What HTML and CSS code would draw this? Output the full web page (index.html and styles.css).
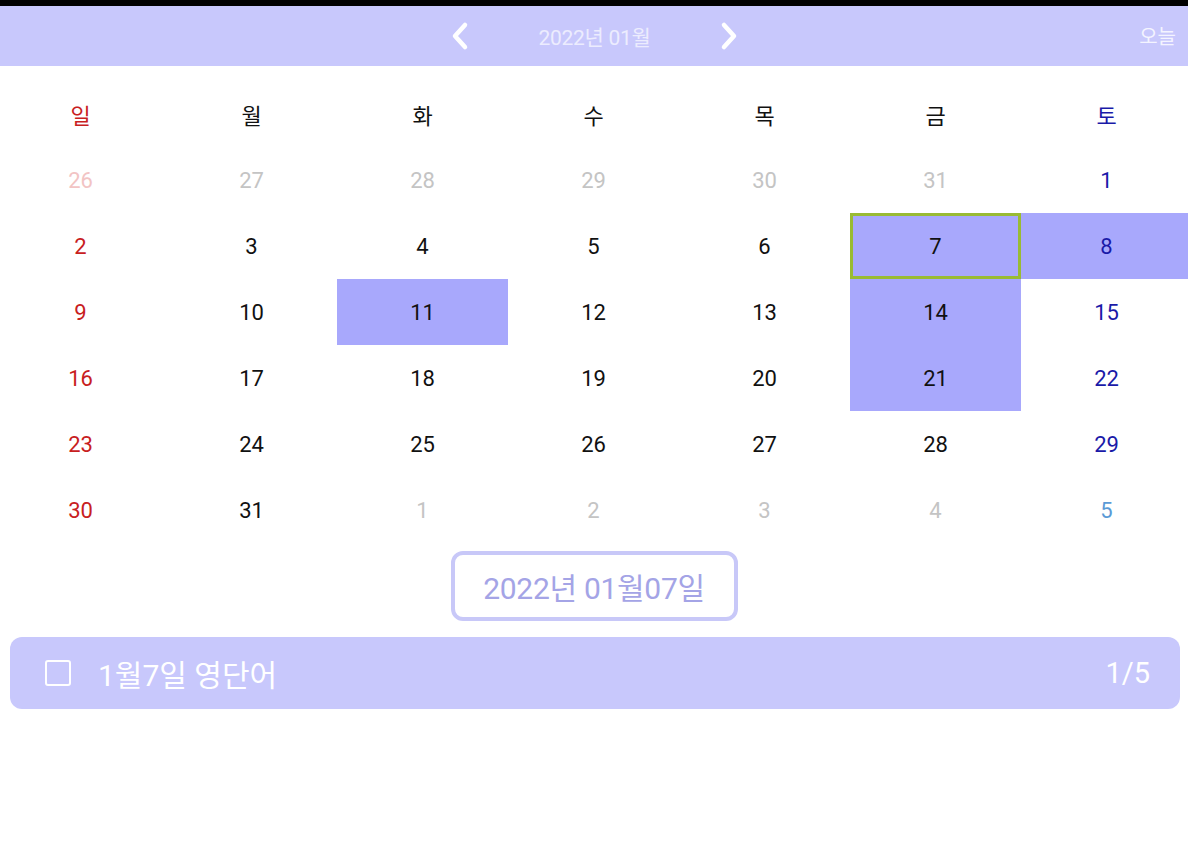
FILE: index.html
```html
<!DOCTYPE html>
<html lang="ko">
<head>
    <meta charset="UTF-8">
    <meta name="viewport" content="width=device-width, initial-scale=1.0">
    <title>Calendar</title>
    <link rel="stylesheet" href="styles.css">
</head>
<body>
    <div class="status-bar"></div>

    <header class="month-bar">
        <div class="month-nav">
            <svg class="chevron" width="22" height="30" viewBox="0 0 22 30"><path d="M16 4 L6 15 L16 26" /></svg>
            <span class="month-title">2022년 01월</span>
            <svg class="chevron" width="22" height="30" viewBox="0 0 22 30"><path d="M6 4 L16 15 L6 26" /></svg>
        </div>
        <span class="today-button">오늘</span>
    </header>

    <main>
        <div class="calendar">
            <div class="cell sun">일</div>
            <div class="cell">월</div>
            <div class="cell">화</div>
            <div class="cell">수</div>
            <div class="cell">목</div>
            <div class="cell">금</div>
            <div class="cell sat">토</div>

            <div class="cell sun other">26</div>
            <div class="cell other">27</div>
            <div class="cell other">28</div>
            <div class="cell other">29</div>
            <div class="cell other">30</div>
            <div class="cell other">31</div>
            <div class="cell sat">1</div>

            <div class="cell sun">2</div>
            <div class="cell">3</div>
            <div class="cell">4</div>
            <div class="cell">5</div>
            <div class="cell">6</div>
            <div class="cell marked selected">7</div>
            <div class="cell sat marked">8</div>

            <div class="cell sun">9</div>
            <div class="cell">10</div>
            <div class="cell marked">11</div>
            <div class="cell">12</div>
            <div class="cell">13</div>
            <div class="cell marked">14</div>
            <div class="cell sat">15</div>

            <div class="cell sun">16</div>
            <div class="cell">17</div>
            <div class="cell">18</div>
            <div class="cell">19</div>
            <div class="cell">20</div>
            <div class="cell marked">21</div>
            <div class="cell sat">22</div>

            <div class="cell sun">23</div>
            <div class="cell">24</div>
            <div class="cell">25</div>
            <div class="cell">26</div>
            <div class="cell">27</div>
            <div class="cell">28</div>
            <div class="cell sat">29</div>

            <div class="cell sun">30</div>
            <div class="cell">31</div>
            <div class="cell other">1</div>
            <div class="cell other">2</div>
            <div class="cell other">3</div>
            <div class="cell other">4</div>
            <div class="cell sat-next">5</div>
        </div>

        <div class="date-box">2022년 01월07일</div>

        <div class="task">
            <span class="checkbox"></span>
            <span class="task-title">1월7일 영단어</span>
            <span class="task-count">1/5</span>
        </div>
    </main>
</body>
</html>
```
FILE: styles.css
```css
/* General body styles */
body {
    margin: 0;
    padding: 0;
    width: 1188px;
    height: 853px;
    overflow: hidden;
    background-color: #fff;
    font-family: Roboto, "Noto Sans CJK KR", sans-serif;
}

.status-bar {
    height: 6px;
    background-color: #000;
}

/* Month header */
.month-bar {
    height: 60px;
    background-color: #c8c8fc;
    display: flex;
    align-items: center;
    justify-content: center;
    position: relative;
}

.month-nav {
    display: flex;
    align-items: center;
    gap: 68px;
    margin-left: 1px;
}

.chevron path {
    fill: none;
    stroke: #fff;
    stroke-width: 4.5;
    stroke-linecap: round;
    stroke-linejoin: round;
}

.month-title {
    font-size: 21px;
    color: #ececfe;
    letter-spacing: -0.3px;
}

.today-button {
    position: absolute;
    right: 12px;
    top: 15px;
    font-size: 20px;
    color: #f4f4ff;
}

/* Calendar grid */
.calendar {
    display: grid;
    grid-template-columns: repeat(7, 171px);
    grid-auto-rows: 66px;
    margin: 15px 0 0 -5px;
    width: 1197px;
}

.cell {
    display: flex;
    align-items: center;
    justify-content: center;
    font-size: 22px;
    color: #111;
    box-sizing: border-box;
}

.cell.sun {
    color: #c8201e;
}

.cell.sat {
    color: #1a1aa8;
}

.cell.other {
    color: #c4c4c4;
}

.cell.sun.other {
    color: #f2c4c4;
}

.cell.sat-next {
    color: #5a9ad6;
}

.cell.marked {
    background-color: #a8a8fc;
}

.cell.selected {
    border: 3px solid #99bb33;
}

/* Selected date */
.date-box {
    width: 287px;
    height: 70px;
    margin: 8px auto 0;
    box-sizing: border-box;
    border: 4px solid #c8c8f8;
    border-radius: 12px;
    display: flex;
    align-items: center;
    justify-content: center;
    font-size: 30px;
    color: #a4a4e6;
    letter-spacing: -0.3px;
}

/* Task row */
.task {
    margin: 16px 8px 0 10px;
    height: 72px;
    border-radius: 12px;
    background-color: #c8c8fc;
    display: flex;
    align-items: center;
    padding: 0 30px 0 35px;
    color: #fff;
}

.checkbox {
    width: 22px;
    height: 22px;
    border: 2.5px solid #fff;
    border-radius: 3px;
    margin: 0 27px 0 0;
}

.task-title {
    font-size: 30px;
    flex-grow: 1;
}

.task-count {
    font-size: 29px;
}
```
